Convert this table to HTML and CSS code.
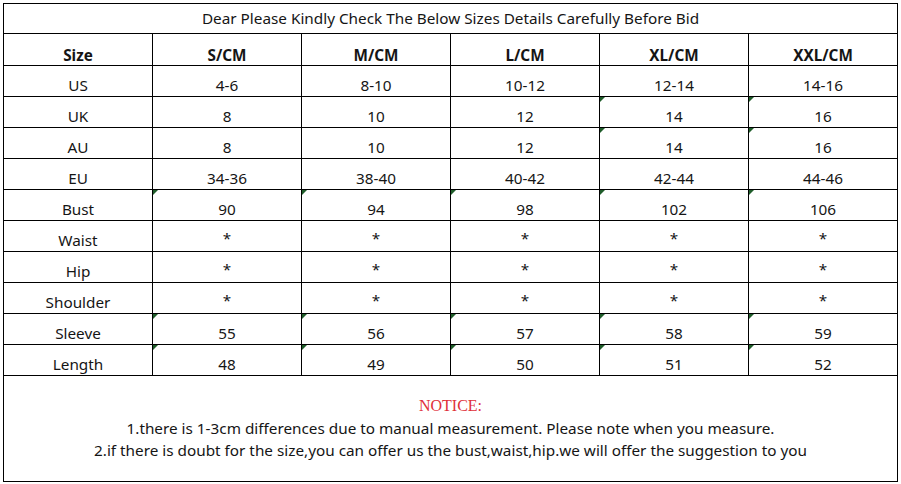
FILE: index.html
```html
<!DOCTYPE html>
<html>
<head>
<meta charset="utf-8">
<link rel="stylesheet" href="styles.css">
</head>
<body>
<div class="sheet">
  <div class="grid">
    <div class="cell title">Dear Please Kindly Check The Below Sizes Details Carefully Before Bid</div>

    <div class="cell head">Size</div><div class="cell head">S/CM</div><div class="cell head">M/CM</div><div class="cell head">L/CM</div><div class="cell head">XL/CM</div><div class="cell head">XXL/CM</div>

    <div class="cell">US</div><div class="cell">4-6</div><div class="cell">8-10</div><div class="cell">10-12</div><div class="cell">12-14</div><div class="cell">14-16</div>

    <div class="cell">UK</div><div class="cell">8</div><div class="cell">10</div><div class="cell">12</div><div class="cell flag">14</div><div class="cell flag">16</div>

    <div class="cell">AU</div><div class="cell">8</div><div class="cell">10</div><div class="cell">12</div><div class="cell flag">14</div><div class="cell flag">16</div>

    <div class="cell">EU</div><div class="cell">34-36</div><div class="cell">38-40</div><div class="cell">40-42</div><div class="cell">42-44</div><div class="cell">44-46</div>

    <div class="cell">Bust</div><div class="cell flag">90</div><div class="cell flag">94</div><div class="cell flag">98</div><div class="cell flag">102</div><div class="cell flag">106</div>

    <div class="cell">Waist</div><div class="cell star">*</div><div class="cell star">*</div><div class="cell star">*</div><div class="cell star">*</div><div class="cell star">*</div>

    <div class="cell">Hip</div><div class="cell star">*</div><div class="cell star">*</div><div class="cell star">*</div><div class="cell star">*</div><div class="cell star">*</div>

    <div class="cell">Shoulder</div><div class="cell star">*</div><div class="cell star">*</div><div class="cell star">*</div><div class="cell star">*</div><div class="cell star">*</div>

    <div class="cell">Sleeve</div><div class="cell flag">55</div><div class="cell flag">56</div><div class="cell flag">57</div><div class="cell flag">58</div><div class="cell flag">59</div>

    <div class="cell">Length</div><div class="cell flag">48</div><div class="cell flag">49</div><div class="cell flag">50</div><div class="cell flag">51</div><div class="cell flag">52</div>

    <div class="cell notice">
      <div class="notice-title">NOTICE:</div>
      <div class="notice-line">1.there is 1-3cm differences due to manual measurement. Please note when you measure.</div>
      <div class="notice-line">2.if there is doubt for the size,you can offer us the bust,waist,hip.we will offer the suggestion to you</div>
    </div>
  </div>
</div>
</body>
</html>
```
FILE: styles.css
```css
html, body {
  margin: 0;
  padding: 0;
  background: #fff;
}
.sheet {
  width: 901px;
  height: 484px;
  padding: 3px 0 0 3px;
  box-sizing: border-box;
  overflow: hidden;
}
.grid {
  display: grid;
  grid-template-columns: repeat(6, 149px);
  grid-template-rows: 30px 32px repeat(10, 31px) 106px;
  width: 895px;
  border-left: 1px solid #000;
  border-top: 1px solid #000;
  box-sizing: border-box;
  font-family: "Noto Sans", "Open Sans", sans-serif;
  font-size: 15.3px;
  color: #151515;
}
.cell {
  border-right: 1px solid #000;
  border-bottom: 1px solid #000;
  display: flex;
  align-items: flex-end;
  justify-content: center;
  line-height: 18px;
  padding-bottom: 2px;
  position: relative;
  box-sizing: border-box;
}
.cell.title {
  grid-column: 1 / -1;
  padding-bottom: 6px;
}
.cell.head {
  font-weight: bold;
  padding-bottom: 1px;
}
.cell.star {
  padding-bottom: 4px;
}
.cell.flag::before {
  content: "";
  position: absolute;
  left: 0;
  top: 0;
  width: 0;
  height: 0;
  border-top: 5px solid #1f5d2a;
  border-right: 5px solid transparent;
}
.cell.notice {
  grid-column: 1 / -1;
  flex-direction: column;
  align-items: center;
  justify-content: flex-start;
  padding: 19px 0 0;
}
.notice-title {
  font-family: "Liberation Serif", serif;
  color: #e0303a;
  font-size: 16px;
  line-height: 22px;
}
.notice-line {
  line-height: 22px;
}
```
